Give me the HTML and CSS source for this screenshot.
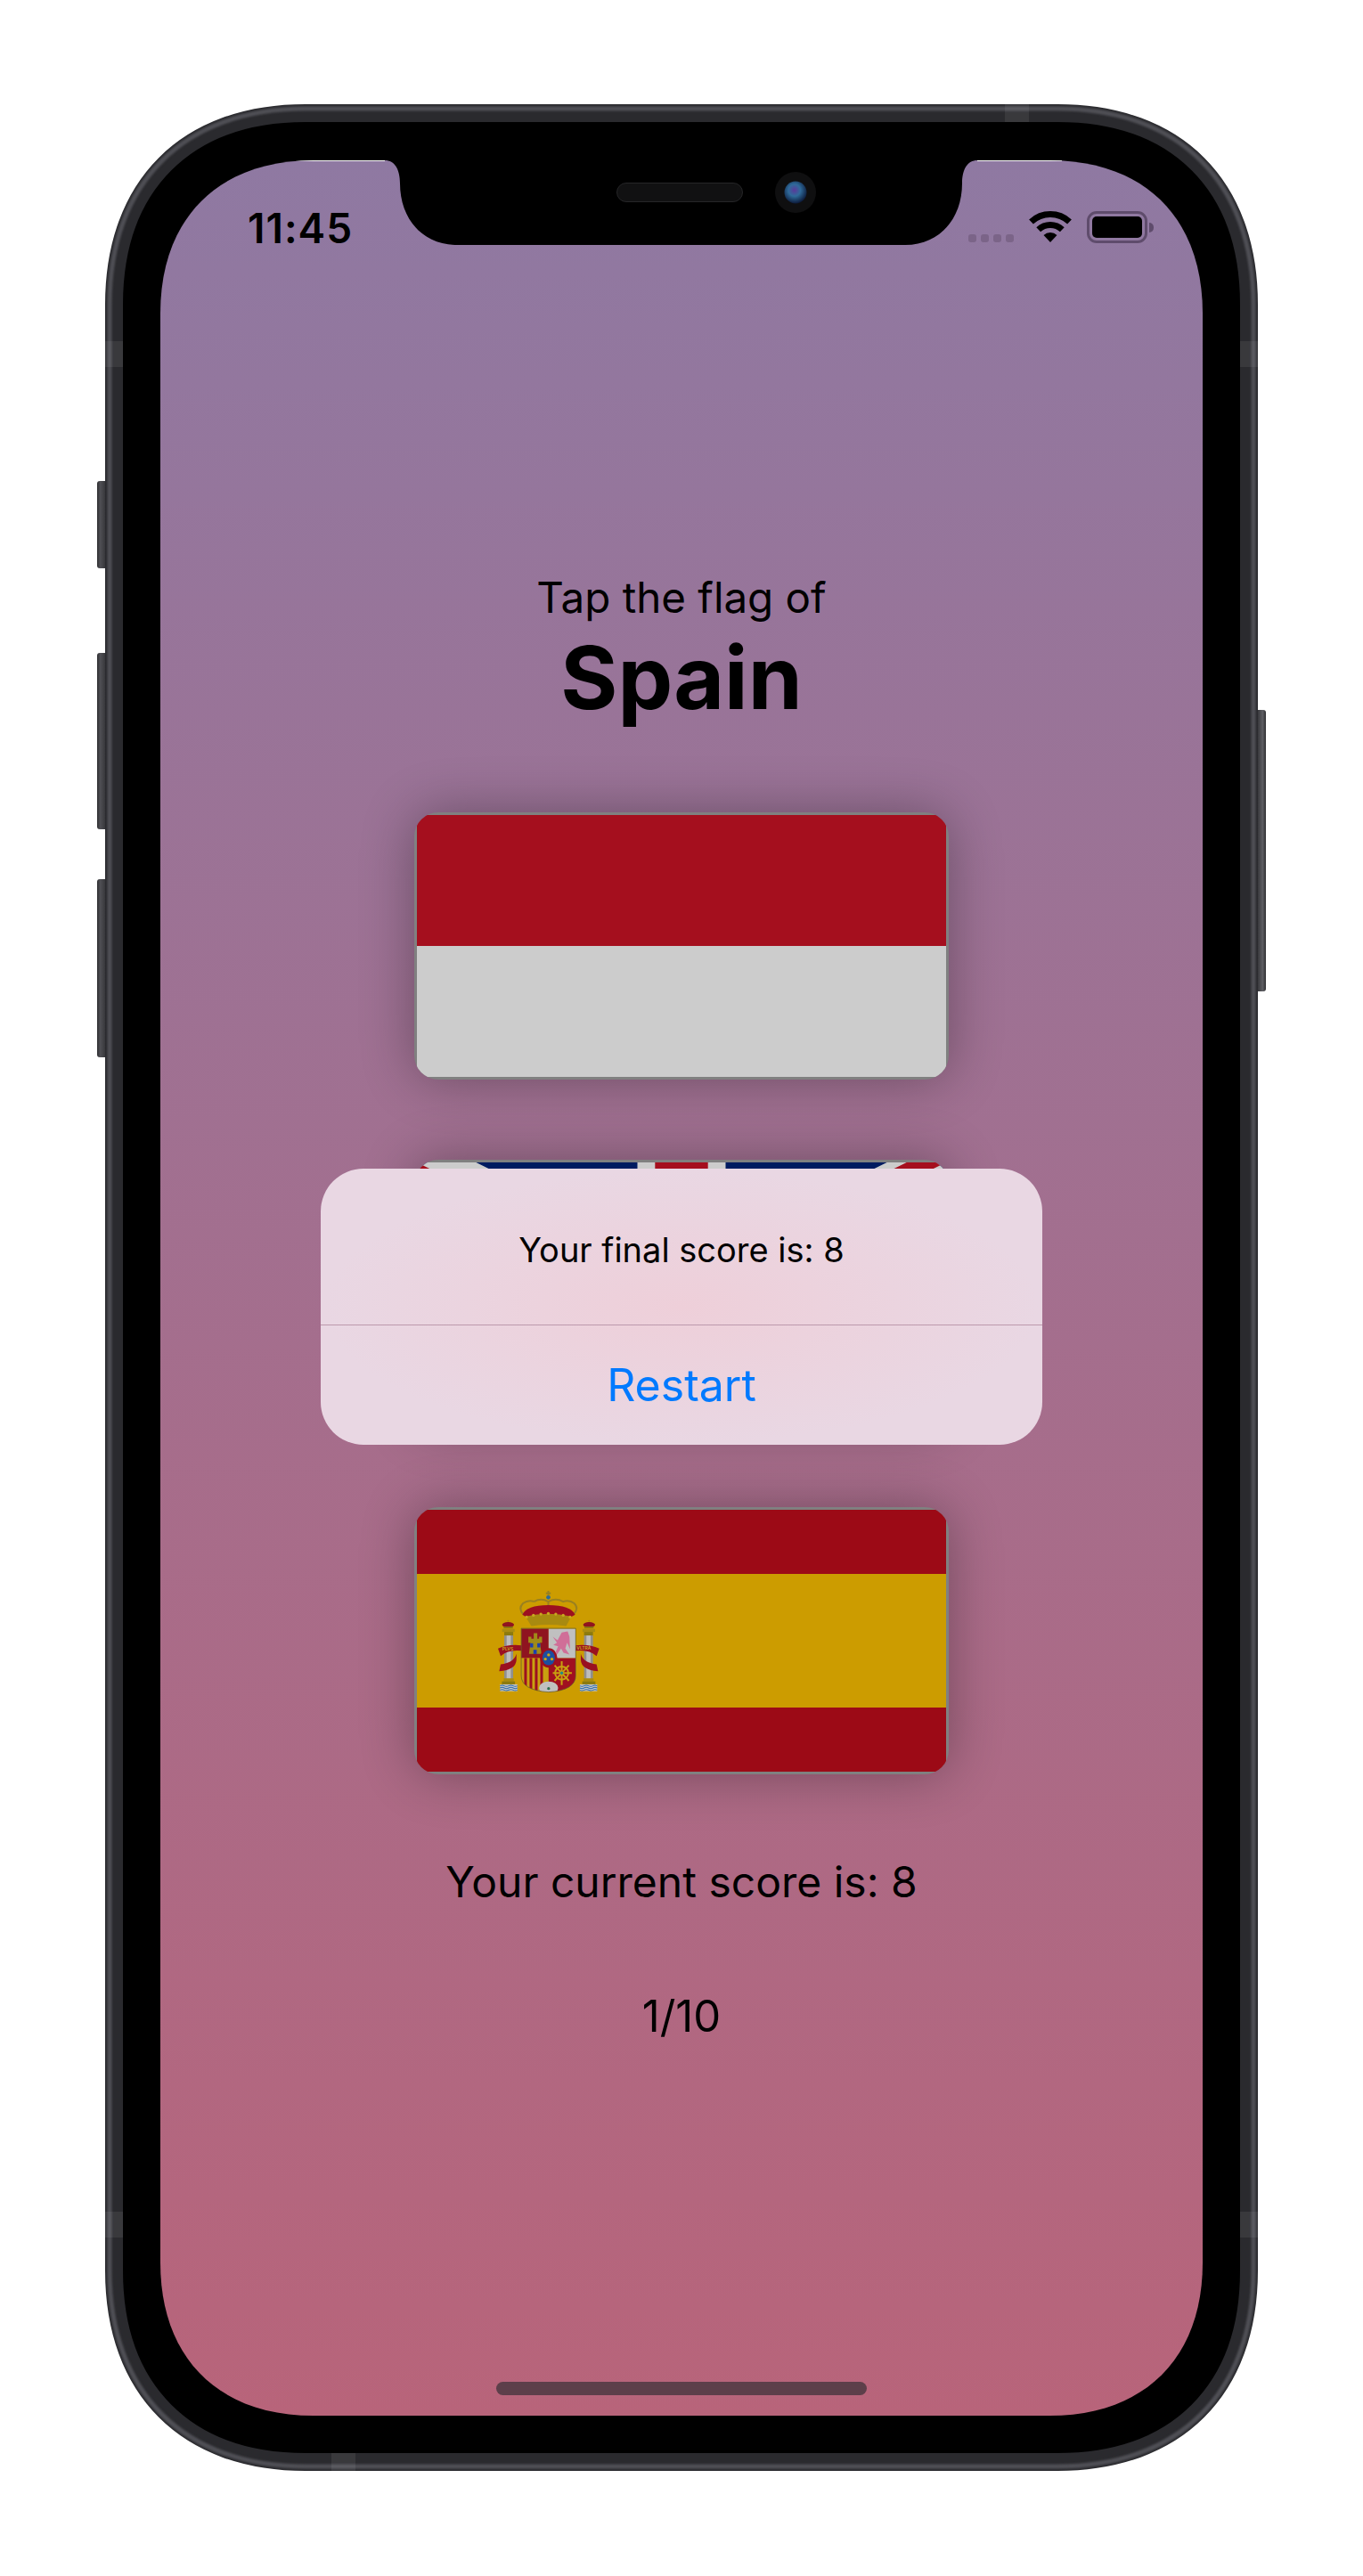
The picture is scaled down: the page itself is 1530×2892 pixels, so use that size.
FILE: index.html
```html
<!DOCTYPE html>
<html lang="en">
<head>
  <meta charset="UTF-8" />
  <title>Guess the Flag</title>
  <link rel="stylesheet" href="styles.css">
</head>
<body>

<div class="phone">

  <!-- Hardware: steel band and antenna lines -->
  <svg class="frame" viewBox="0 0 1294 2657">
    <path class="frame-base" d="M10,225 C10,91 91,10 225,10 H1069 C1203,10 1284,91 1284,225 V2432 C1284,2566 1203,2647 1069,2647 H225 C91,2647 10,2566 10,2432 Z"/>
    <path class="frame-shine" d="M5,225 C5,88 88,5 225,5 H1069 C1206,5 1289,88 1289,225 V2432 C1289,2569 1206,2652 1069,2652 H225 C88,2652 5,2569 5,2432 Z"/>
    <rect class="antenna" x="1010" y="0" width="27" height="20"/>
    <rect class="antenna" x="254" y="2637" width="27" height="20"/>
    <rect class="antenna" x="0" y="266" width="20" height="29"/>
    <rect class="antenna" x="1274" y="266" width="20" height="29"/>
    <rect class="antenna" x="0" y="2366" width="20" height="29"/>
    <rect class="antenna" x="1274" y="2366" width="20" height="29"/>
  </svg>
  <div class="side-btn side-btn-mute"></div>
  <div class="side-btn side-btn-up"></div>
  <div class="side-btn side-btn-down"></div>
  <div class="side-btn side-btn-power"></div>

  <div class="screen">

    <!-- Status bar -->
    <div class="statusbar">
      <span class="clock">11:45</span>
      <div class="status-icons">
        <div class="signal"><i></i><i></i><i></i><i></i></div>
        <svg class="wifi" viewBox="0 0 48 35">
          <path class="wifi-arc" d="M2.5,12 A31.5,31.5 0 0 1 45.5,12"/>
          <path class="wifi-arc" d="M10.7,20.7 A19.5,19.5 0 0 1 37.3,20.7"/>
          <path d="M24,35 L16.5,27 A11,11 0 0 1 31.5,27 Z"/>
        </svg>
        <div class="battery"><div class="battery-level"></div></div>
        <div class="battery-nub"></div>
      </div>
    </div>

    <!-- Question -->
    <div class="prompt">Tap the flag of</div>
    <div class="country">Spain</div>

    <!-- Flags -->
    <div class="flags">
      <div class="flag flag-monaco">
        <div class="band-red"></div>
        <div class="band-white"></div>
      </div>

      <div class="flag">
        <svg class="flag-uk" viewBox="0 0 60 30" preserveAspectRatio="none">
          <clipPath id="uk-diag"><path d="M30,15 h30 v15 z v15 h-30 z h-30 v-15 z v-15 h30 z"/></clipPath>
          <rect width="60" height="30" fill="#001b60"/>
          <path d="M0,0 L60,30 M60,0 L0,30" stroke="#ccc" stroke-width="6"/>
          <path d="M0,0 L60,30 M60,0 L0,30" clip-path="url(#uk-diag)" stroke="#a50f1e" stroke-width="4"/>
          <path d="M30,0 v30 M0,15 h60" stroke="#ccc" stroke-width="10"/>
          <path d="M30,0 v30 M0,15 h60" stroke="#a50f1e" stroke-width="6"/>
        </svg>
      </div>

      <div class="flag flag-spain">
        <div class="band-spain-red"></div>
        <div class="band-spain-yellow">
          <svg class="arms" viewBox="320 310 350 350">
            <defs>
              <clipPath id="shield"><path d="M404,442 H587 V600 Q587,650 496,656 Q404,650 404,600 Z"/></clipPath>
              <g id="pillar">
                <ellipse cx="360" cy="430" rx="20" ry="9" fill="#8f1420"/>
                <circle cx="360" cy="417" r="3" fill="#a98c12"/>
                <rect x="345" y="436" width="31" height="6" fill="#8b7a10"/>
                <rect x="340" y="444" width="42" height="10" fill="#a98c12"/>
                <rect x="347" y="454" width="30" height="12" fill="#8b7a10"/>
                <rect x="347" y="466" width="30" height="145" fill="#8f8f8f"/>
                <rect x="355" y="466" width="14" height="145" fill="#bdbdbd"/>
                <rect x="345" y="610" width="34" height="10" fill="#a98c12"/>
                <rect x="339" y="620" width="44" height="10" fill="#8b7a10"/>
                <rect x="333" y="630" width="58" height="23" fill="#c4c4c4"/>
                <path class="waves" d="M333,635 q7,-4 14,0 t15,0 t15,0 t14,0 M333,642 q7,-4 14,0 t15,0 t15,0 t14,0 M333,649 q7,-4 14,0 t15,0 t15,0 t14,0"/>
                <path class="ribbon" d="M326,510 Q360,494 405,499 V517 Q360,512 335,535 Z"/>
                <path class="ribbon" d="M388,528 Q380,558 335,563 L330,586 Q386,582 388,548 Z"/>
              </g>
            </defs>

            <use href="#pillar"/>
            <use href="#pillar" transform="translate(992,0) scale(-1,1)"/>
            <text class="motto" x="340" y="516">PLVS</text>
            <text class="motto" x="590" y="514">VLTRA</text>

            <!-- Crown -->
            <path class="crown-arc" d="M412,396 Q392,376 410,358 Q428,345 447,352 M447,352 Q470,338 495,352 Q520,338 545,352 Q566,345 582,358 Q600,376 578,396 M495,352 V396"/>
            <path d="M408,396 Q422,364 495,364 Q570,364 585,396 L560,410 H430 Z" fill="#9c1020"/>
            <path d="M418,402 Q495,384 572,402 L555,434 Q495,426 438,434 Z" fill="#a88a10"/>
            <circle cx="495" cy="338" r="7" fill="#2a6a9a"/>
            <path class="crown-arc" d="M495,316 V332 M487,324 H503"/>
            <g fill="#c8a820">
              <circle cx="422" cy="404" r="5"/><circle cx="445" cy="398" r="5"/><circle cx="470" cy="394" r="5"/>
              <circle cx="495" cy="392" r="5"/><circle cx="520" cy="394" r="5"/><circle cx="545" cy="398" r="5"/><circle cx="568" cy="404" r="5"/>
            </g>

            <!-- Shield -->
            <g clip-path="url(#shield)">
              <rect x="404" y="442" width="92" height="100" fill="#8f1420"/>
              <rect x="496" y="442" width="91" height="100" fill="#c0c0c0"/>
              <rect x="404" y="542" width="92" height="114" fill="#c9a010"/>
              <path d="M414,542 h9 v114 h-9 z M432,542 h9 v114 h-9 z M450,542 h9 v114 h-9 z M468,542 h9 v114 h-9 z" fill="#9c1020"/>
              <rect x="496" y="542" width="91" height="114" fill="#a01020"/>
              <ellipse cx="496" cy="642" rx="32" ry="22" fill="#c0c0c0"/>
              <circle cx="496" cy="644" r="5" fill="#2f7050"/>
            </g>
            <path d="M404,442 H587 V600 Q587,650 496,656 Q404,650 404,600 Z" fill="none" stroke="#5a5a30" stroke-width="2"/>

            <!-- Castle -->
            <path d="M430,528 L435,490 H428 V470 H438 V477 H446 V458 H458 V477 H464 V470 H474 V490 H467 L472,528 Z" fill="#a08a18"/>
            <rect x="434" y="492" width="10" height="14" fill="#1c3fb0"/>
            <rect x="458" y="492" width="10" height="14" fill="#1c3fb0"/>
            <rect x="445" y="514" width="11" height="14" fill="#1c3fb0"/>

            <!-- Lion -->
            <path d="M510,470 L526,482 L540,456 L560,452 L566,470 L568,512 L558,490 L552,510 L566,530 L546,524 L538,510 L524,530 L520,520 L528,502 L512,498 L524,490 Z" fill="#d06e98"/>

            <!-- Chains -->
            <g class="chain">
              <path d="M540,552 V632 M510,592 H574 M516,566 L564,618 M564,566 L516,618"/>
              <circle cx="540" cy="592" r="22"/>
            </g>
            <circle cx="540" cy="592" r="5" fill="#1f8a8a"/>

            <!-- Centre oval -->
            <ellipse cx="496" cy="541" rx="29" ry="33" fill="#9c1020"/>
            <ellipse cx="496" cy="541" rx="21" ry="25" fill="#1c4fa0"/>
            <g fill="#d0a818">
              <circle cx="496" cy="531" r="5"/><circle cx="485" cy="545" r="5"/><circle cx="507" cy="545" r="5"/>
            </g>
          </svg>
        </div>
        <div class="band-spain-red"></div>
      </div>
    </div>

    <div class="score">Your current score is: 8</div>
    <div class="round">1/10</div>

    <div class="home-indicator"></div>

    <!-- Notch -->
    <svg class="notch" viewBox="0 0 1170 110">
      <defs>
        <radialGradient id="lens" cx="0.45" cy="0.4" r="0.6">
          <stop offset="0" stop-color="#5a3a9a"/>
          <stop offset="0.45" stop-color="#2f6a9a"/>
          <stop offset="1" stop-color="#0c1a3a"/>
        </radialGradient>
      </defs>
      <path d="M252,0 C263,0 269,10 269,26 C269,64 293,95 333,95 H836 C876,95 900,64 900,26 C900,10 906,0 917,0 Z"/>
      <line class="edge-glint" x1="152" y1="0.5" x2="252" y2="0.5"/>
      <line class="edge-glint" x1="917" y1="0.5" x2="1012" y2="0.5"/>
      <rect class="speaker" x="512.5" y="25.5" width="141" height="21" rx="10.5"/>
      <circle cx="713" cy="36" r="23" fill="#0f0f10"/>
      <circle cx="713" cy="36" r="12.5" fill="url(#lens)"/>
    </svg>

    <!-- Alert -->
    <div class="alert">
      <div class="alert-message">Your final score is: 8</div>
      <div class="alert-action">Restart</div>
    </div>

  </div>
</div>

</body>
</html>
```

FILE: styles.css
```css
* {
  margin: 0;
  padding: 0;
  box-sizing: border-box;
}

body {
  width: 1530px;
  height: 2892px;
  padding: 117px 0 0 118px;
  background-color: white;
  font-family: Inter, 'Liberation Sans', sans-serif;
  color: black;
  overflow: hidden;
}

.phone {
  position: relative;
  width: 1294px;
  height: 2657px;
  padding: 63px 62px;
}

/* Hardware */
.frame {
  position: absolute;
  top: 0;
  left: 0;
  width: 1294px;
  height: 2657px;
}

.frame-base {
  fill: black;
  stroke: #2a2a2e;
  stroke-width: 20;
}

.frame-shine {
  fill: none;
  stroke: #4f4f55;
  stroke-width: 5;
  filter: blur(1px);
}

.antenna {
  fill: rgba(255, 255, 255, 0.07);
}

.side-btn {
  position: absolute;
  left: -9px;
  width: 9px;
  border-radius: 3px 0 0 3px;
  background: linear-gradient(to right, #2e2e31, #4f4f54 40%, #38383c);
}

.side-btn-mute {
  top: 423px;
  height: 98px;
}

.side-btn-up {
  top: 616px;
  height: 198px;
}

.side-btn-down {
  top: 870px;
  height: 200px;
}

.side-btn-power {
  left: 1294px;
  top: 680px;
  height: 316px;
  border-radius: 0 3px 3px 0;
  background: linear-gradient(to left, #2e2e31, #5e5e63 40%, #38383c);
}

/* Screen */
.screen {
  position: relative;
  display: flex;
  flex-direction: column;
  align-items: center;
  width: 1170px;
  height: 2532px;
  background: linear-gradient(to bottom, #8f79a2, #b8647a);
  clip-path: path("M0,172 C0,65 65,0 172,0 H998 C1105,0 1170,65 1170,172 V2360 C1170,2467 1105,2532 998,2532 H172 C65,2532 0,2467 0,2360 Z");
}

.statusbar {
  display: flex;
  justify-content: space-between;
  width: 100%;
  height: 36px;
  margin-top: 57px;
  padding: 0 55px 0 98px;
}

.clock {
  font-size: 46px;
  font-weight: 600;
  line-height: 38px;
  letter-spacing: 1px;
}

.status-icons {
  display: flex;
  align-items: flex-start;
}

.signal {
  display: flex;
  gap: 5px;
  margin-top: 26px;
  margin-right: 17px;
}

.signal i {
  display: block;
  width: 9px;
  height: 9px;
  border-radius: 3px;
  background-color: #7b6488;
}

.wifi {
  width: 48px;
  height: 35px;
  margin-right: 17px;
}

.wifi-arc {
  fill: none;
  stroke: black;
  stroke-width: 7;
}

.battery {
  width: 68px;
  height: 36px;
  padding: 3px;
  border: 3px solid #5f4c6c;
  border-radius: 11px;
}

.battery-level {
  height: 100%;
  border-radius: 5px;
  background-color: black;
}

.battery-nub {
  width: 5px;
  height: 11px;
  margin: 13px 0 0 2px;
  border-radius: 0 5px 5px 0;
  background-color: #5f4c6c;
}

/* Question */
.prompt {
  margin-top: 369px;
  font-size: 47.5px;
  line-height: 58px;
}

.country {
  font-size: 98px;
  font-weight: 700;
  line-height: 122px;
}

/* Flags */
.flags {
  display: flex;
  flex-direction: column;
  gap: 90px;
  margin-top: 90px;
}

.flag {
  display: flex;
  flex-direction: column;
  width: 600px;
  height: 300px;
  padding: 3px;
  border-radius: 27px;
  background-color: #808080;
  overflow: hidden;
  box-shadow: 0 0 60px rgba(0, 0, 0, 0.32);
}

.band-red {
  flex: 1;
  background-color: #a50f1e;
}

.band-white {
  flex: 1;
  background-color: #cccccc;
}

.flag-uk {
  width: 100%;
  height: 100%;
}

.band-spain-red {
  height: 72px;
  background-color: #9c0a16;
}

.band-spain-yellow {
  display: flex;
  align-items: center;
  height: 150px;
  padding-left: 89px;
  background-color: #cc9c00;
}

.arms {
  width: 117px;
  height: 117px;
}

.waves {
  fill: none;
  stroke: #2a6cae;
  stroke-width: 3;
}

.ribbon {
  fill: #9a1020;
}

.motto {
  font-size: 15px;
  font-weight: 600;
  fill: #c8a820;
}

.crown-arc {
  fill: none;
  stroke: #9a8020;
  stroke-width: 6;
}

.chain {
  fill: none;
  stroke: #c8a010;
  stroke-width: 6;
}

/* Score */
.score {
  margin-top: 91px;
  font-size: 48px;
  line-height: 60px;
}

.round {
  margin-top: 91px;
  font-size: 49px;
  line-height: 60px;
}

.home-indicator {
  width: 416px;
  height: 15px;
  margin-top: auto;
  margin-bottom: 23px;
  border-radius: 8px;
  background-color: #5d3f4a;
}

/* Notch */
.notch {
  position: absolute;
  top: 0;
  left: 0;
  width: 1170px;
  height: 110px;
}

.edge-glint {
  stroke: white;
  stroke-width: 1;
}

.speaker {
  fill: #111112;
  stroke: #262628;
  stroke-width: 1;
}

/* Alert */
.alert {
  position: absolute;
  top: 1132px;
  left: 180px;
  display: flex;
  flex-direction: column;
  width: 810px;
  height: 310px;
  border-radius: 48px;
  background: radial-gradient(ellipse at center, #eecfd9, #e9d7e3 70%);
  text-align: center;
}

.alert-message {
  height: 178px;
  padding-top: 61px;
  border-bottom: 1px solid #bc99ac;
  font-size: 38px;
  line-height: 60px;
}

.alert-action {
  flex: 1;
  font-size: 50px;
  line-height: 134px;
  color: #007aff;
}
```
